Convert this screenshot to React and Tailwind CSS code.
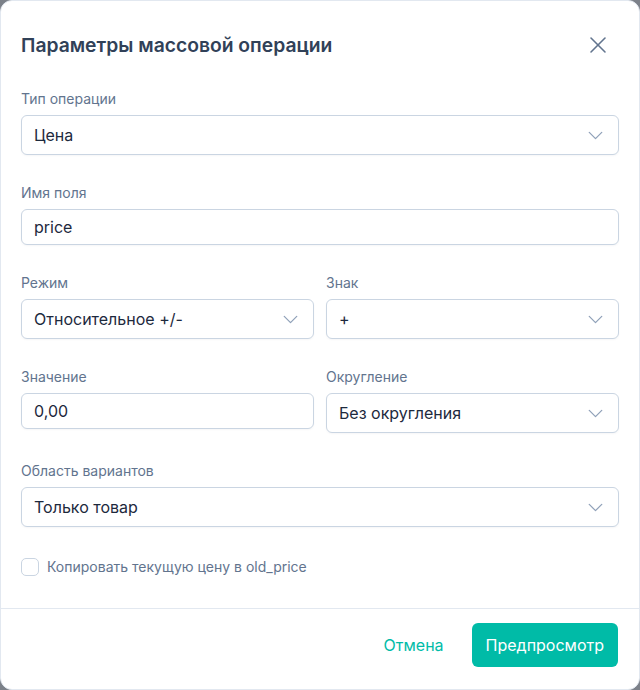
import { X, ChevronDown } from 'lucide-react'

const Label = ({ children }) => (
  <label className="mb-1.5 block text-sm leading-5 text-slate-500">{children}</label>
)

const SelectBox = ({ value }) => (
  <div className="flex h-10 items-center justify-between rounded-md border border-slate-300 bg-white pl-3 pr-2.5 shadow-[0_1px_2px_rgba(15,23,42,0.04)]">
    <span className="text-base text-slate-800">{value}</span>
    <ChevronDown size={25} strokeWidth={1.2} className="text-slate-400" />
  </div>
)

const TextBox = ({ value }) => (
  <div className="flex h-9 items-center rounded-md border border-slate-300 bg-white px-3 shadow-[0_1px_2px_rgba(15,23,42,0.04)]">
    <span className="text-base text-slate-800">{value}</span>
  </div>
)

const Field = ({ label, children }) => (
  <div>
    <Label>{label}</Label>
    {children}
  </div>
)

export default function App() {
  return (
    <div
      className="h-[690px] w-[640px] bg-[#7c8189]"
      style={{ fontFamily: 'Inter, "Noto Sans", sans-serif' }}
    >
      <div className="flex h-full flex-col rounded-xl border border-slate-200 bg-white">
        <div className="flex items-center justify-between pl-5 pr-[27px] pt-[30px]">
          <h2 className="text-[19.3px] font-semibold leading-7 text-slate-700">
            Параметры массовой операции
          </h2>
          <button className="text-slate-500">
            <X size={28} strokeWidth={1.3} />
          </button>
        </div>

        <div className="flex flex-1 flex-col gap-7 px-5 pt-[30px]">
          <Field label="Тип операции">
            <SelectBox value="Цена" />
          </Field>

          <Field label="Имя поля">
            <TextBox value="price" />
          </Field>

          <div className="grid grid-cols-2 gap-3">
            <Field label="Режим">
              <SelectBox value="Относительное +/-" />
            </Field>
            <Field label="Знак">
              <SelectBox value="+" />
            </Field>
          </div>

          <div className="grid grid-cols-2 gap-3">
            <Field label="Значение">
              <TextBox value="0,00" />
            </Field>
            <Field label="Округление">
              <SelectBox value="Без округления" />
            </Field>
          </div>

          <Field label="Область вариантов">
            <SelectBox value="Только товар" />
          </Field>

          <label className="mt-0.5 flex h-5 items-center gap-2">
            <span className="h-[18px] w-[18px] rounded-[5px] border border-slate-300 bg-white" />
            <span className="text-sm text-slate-500">Копировать текущую цену в old_price</span>
          </label>
        </div>

        <div className="flex items-center justify-end gap-3 border-t border-slate-200 pb-[22px] pr-[21px] pt-[14px]">
          <button className="h-11 px-4 text-base text-teal-500">Отмена</button>
          <button className="h-11 rounded-md bg-teal-500 px-3.5 text-base text-white">
            Предпросмотр
          </button>
        </div>
      </div>
    </div>
  )
}
